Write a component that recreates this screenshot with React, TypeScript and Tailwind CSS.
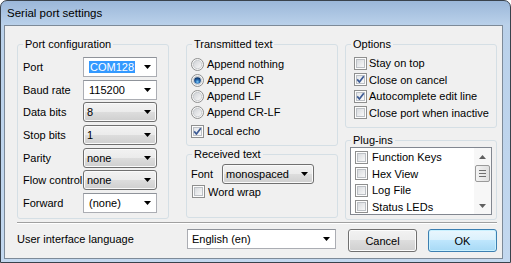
import React, { useId } from "react";

function cleanId(id: string) {
  return id.replace(/[^a-zA-Z0-9]/g, "");
}

function Arrow({ up = false, color = "#000" }: { up?: boolean; color?: string }) {
  return (
    <svg width="7" height="4" viewBox="0 0 7 4" className="shrink-0">
      <path d={up ? "M0 4H7L3.5 0Z" : "M0 0H7L3.5 4Z"} fill={color} />
    </svg>
  );
}

function CheckBox({ checked = false }: { checked?: boolean }) {
  const id = cleanId(useId());
  return (
    <svg width="13" height="13" viewBox="0 0 13 13" className="shrink-0">
      <defs>
        <linearGradient id={id} x1="0" y1="0" x2="1" y2="1">
          <stop offset="0" stopColor={checked ? "#e2e5e9" : "#d6d9dd"} />
          <stop offset="1" stopColor="#fafafa" />
        </linearGradient>
      </defs>
      <rect x="0.5" y="0.5" width="12" height="12" fill="#fdfdfd" stroke="#8e8f8f" />
      <rect x="2.5" y="2.5" width="8" height="8" fill={`url(#${id})`} stroke="#bcc0c5" />
      {checked && (
        <path d="M3.2 6.4 L5.4 9 L9.8 3.2" fill="none" stroke="#3c5a94" strokeWidth="1.7" strokeLinejoin="round" />
      )}
    </svg>
  );
}

function Radio({ checked = false }: { checked?: boolean }) {
  const id = cleanId(useId());
  return (
    <svg width="13" height="13" viewBox="0 0 13 13" className="shrink-0">
      <defs>
        <linearGradient id={id + "a"} x1="0" y1="0" x2="1" y2="1">
          <stop offset="0" stopColor="#cdd0d4" />
          <stop offset="1" stopColor="#fafafa" />
        </linearGradient>
        <radialGradient id={id + "b"} cx="0.5" cy="0.7" r="0.6">
          <stop offset="0" stopColor="#7fd0f8" />
          <stop offset="0.5" stopColor="#2a6cb4" />
          <stop offset="1" stopColor="#0d3568" />
        </radialGradient>
      </defs>
      <circle cx="6.5" cy="6.5" r="6" fill="#f6f6f6" stroke="#8e8f8f" />
      <circle cx="6.5" cy="6.5" r="4.2" fill={`url(#${id}a)`} stroke="#bcc0c4" strokeWidth="0.7" />
      {checked && <circle cx="6.5" cy="6.5" r="3.3" fill={`url(#${id}b)`} />}
    </svg>
  );
}

function EditCombo({
  value,
  selected = false,
  className = "",
  textPad = "pl-[5px]",
}: {
  value: string;
  selected?: boolean;
  className?: string;
  textPad?: string;
}) {
  return (
    <div className={`flex h-[20px] items-center border border-[#abadb3] border-t-[#8f939a] bg-white ${className}`}>
      <div className={`flex-1 whitespace-nowrap ${textPad}`}>
        {selected ? <span className="bg-[#3399ff] px-[1px] text-white">{value}</span> : value}
      </div>
      <div className="flex w-[17px] items-center justify-center">
        <Arrow />
      </div>
    </div>
  );
}

function ListCombo({ value, className = "" }: { value: string; className?: string }) {
  return (
    <div
      className={`flex h-[20px] items-center rounded-[3px] border border-[#707070] bg-[linear-gradient(#f2f2f2_0%,#ebebeb_50%,#dddddd_50%,#cfcfcf_100%)] shadow-[inset_0_0_0_1px_#fafafa] ${className}`}
    >
      <div className="flex-1 whitespace-nowrap pl-[3px]">{value}</div>
      <div className="flex w-[17px] items-center justify-center">
        <Arrow />
      </div>
    </div>
  );
}

function Group({ title, className = "", children }: { title: string; className?: string; children?: React.ReactNode }) {
  return (
    <div className={`relative rounded-[3px] border border-[#d5dfe5] ${className}`}>
      <span className="absolute -top-[8px] left-[5px] bg-[#f0f0f0] px-[2px] leading-[14px] whitespace-nowrap">{title}</span>
      {children}
    </div>
  );
}

function Button({ label, def = false }: { label: string; def?: boolean }) {
  return (
    <div
      className={
        def
          ? "flex h-[23px] w-[69px] items-center justify-center rounded-[3px] border border-[#3c7fb1] bg-[linear-gradient(#eaf6fd_0%,#d9f0fc_50%,#bee6fd_50%,#a7d9f5_100%)] shadow-[inset_0_0_0_1px_#c9f1ff]"
          : "flex h-[23px] w-[69px] items-center justify-center rounded-[3px] border border-[#707070] bg-[linear-gradient(#f2f2f2_0%,#ebebeb_50%,#dddddd_50%,#cfcfcf_100%)] shadow-[inset_0_0_0_1px_#fcfcfc]"
      }
    >
      {label}
    </div>
  );
}

const portRows: { label: string; value: string; kind: "edit" | "list"; selected?: boolean }[] = [
  { label: "Port", value: "COM128", kind: "edit", selected: true },
  { label: "Baud rate", value: "115200", kind: "edit" },
  { label: "Data bits", value: "8", kind: "list" },
  { label: "Stop bits", value: "1", kind: "list" },
  { label: "Parity", value: "none", kind: "list" },
  { label: "Flow control", value: "none", kind: "list" },
  { label: "Forward", value: "(none)", kind: "edit" },
];

export default function App() {
  return (
    <div className="h-[263px] w-[511px] font-['Liberation_Sans',Arial,sans-serif] text-[11px] leading-[14px] text-black">
      <div className="flex h-full w-full flex-col rounded-t-[7px] border border-[#39424c] bg-[linear-gradient(to_bottom,#9bb7d9_0px,#bad1ea_24px,#c3d8ef_100%)]">
        <div className="flex h-[24px] shrink-0 items-center pl-[6px] text-[11.5px]">Serial port settings</div>
        <div className="mb-[3px] ml-[3px] mr-[7px] flex flex-1 flex-col border border-[#7d8a98] bg-[#f0f0f0] pl-[12px]">
          <div className="mt-[18px] flex items-start">
            {/* Column 1 */}
            <Group title="Port configuration" className="h-[175px] w-[152px] pl-[5px] pt-[12px]">
              <div className="flex flex-col gap-[2.67px]">
                {portRows.map((r) => (
                  <div key={r.label} className="flex h-[20px] items-center">
                    <div className="w-[60px] whitespace-nowrap">{r.label}</div>
                    {r.kind === "edit" ? (
                      <EditCombo value={r.value} selected={r.selected} className="w-[74px]" />
                    ) : (
                      <ListCombo value={r.value} className="w-[74px]" />
                    )}
                  </div>
                ))}
              </div>
            </Group>

            {/* Column 2 */}
            <div className="ml-[17px] flex w-[152px] flex-col">
              <Group title="Transmitted text" className="h-[102px] pl-[4px] pt-[11px]">
                {[
                  ["Append nothing", false],
                  ["Append CR", true],
                  ["Append LF", false],
                  ["Append CR-LF", false],
                ].map(([t, c]) => (
                  <div key={t as string} className="flex h-[16px] items-center gap-[3px]">
                    <Radio checked={c as boolean} />
                    <span>{t as string}</span>
                  </div>
                ))}
                <div className="mt-[3px] flex h-[16px] items-center gap-[3px]">
                  <CheckBox checked />
                  <span>Local echo</span>
                </div>
              </Group>
              <Group title="Received text" className="mt-[8px] h-[64px] pl-[4px] pt-[9px]">
                <div className="flex h-[20px] items-center">
                  <span className="w-[31px]">Font</span>
                  <ListCombo value="monospaced" className="w-[92px]" />
                </div>
                <div className="flex h-[15px] items-center gap-[3px] pl-[1px]">
                  <CheckBox />
                  <span>Word wrap</span>
                </div>
              </Group>
            </div>

            {/* Column 3 */}
            <div className="ml-[7px] flex w-[152px] flex-col">
              <Group title="Options" className="h-[84px] pl-[8px] pt-[10px]">
                {[
                  ["Stay on top", false],
                  ["Close on cancel", true],
                  ["Autocomplete edit line", true],
                  ["Close port when inactive", false],
                ].map(([t, c]) => (
                  <div key={t as string} className="flex h-[16.5px] items-center gap-[2px]">
                    <CheckBox checked={c as boolean} />
                    <span className="whitespace-nowrap">{t as string}</span>
                  </div>
                ))}
              </Group>
              <Group title="Plug-ins" className="mt-[12px] h-[80px] pl-[4px] pt-[6px]">
                <div className="flex h-[68px] w-[142px] border border-[#828790] bg-white">
                  <div className="flex-1 pl-[4px] pt-[1px]">
                    {["Function Keys", "Hex View", "Log File", "Status LEDs"].map((t) => (
                      <div key={t} className="flex h-[16.5px] items-center gap-[4px]">
                        <CheckBox />
                        <span className="whitespace-nowrap">{t}</span>
                      </div>
                    ))}
                  </div>
                  <div className="flex w-[17px] flex-col items-center bg-[#f7f7f7]">
                    <div className="flex h-[17px] items-center justify-center">
                      <Arrow up color="#606060" />
                    </div>
                    <div className="flex h-[17px] w-[15px] flex-col items-center justify-center gap-[2px] rounded-[2px] border border-[#9a9a9a] bg-[linear-gradient(to_right,#f3f3f3,#e0e0e0)]">
                      <div className="h-px w-[7px] bg-[#6f6f6f]" />
                      <div className="h-px w-[7px] bg-[#6f6f6f]" />
                      <div className="h-px w-[7px] bg-[#6f6f6f]" />
                    </div>
                    <div className="flex-1" />
                    <div className="flex h-[17px] items-center justify-center">
                      <Arrow color="#606060" />
                    </div>
                  </div>
                </div>
              </Group>
            </div>
          </div>

          {/* Separator */}
          <div className="mt-[2px] h-[2px] w-[480px] border-b border-t border-b-white border-t-[#a0a0a0]" />

          {/* Bottom row */}
          <div className="mt-[5px] flex h-[23px] items-start">
            <div className="flex h-[20px] w-[170px] items-center whitespace-nowrap">User interface language</div>
            <EditCombo value="English (en)" className="w-[149px]" textPad="pl-[4px]" />
            <div className="ml-[12px]">
              <Button label="Cancel" />
            </div>
            <div className="ml-[11px]">
              <Button label="OK" def />
            </div>
          </div>
        </div>
      </div>
    </div>
  );
}
